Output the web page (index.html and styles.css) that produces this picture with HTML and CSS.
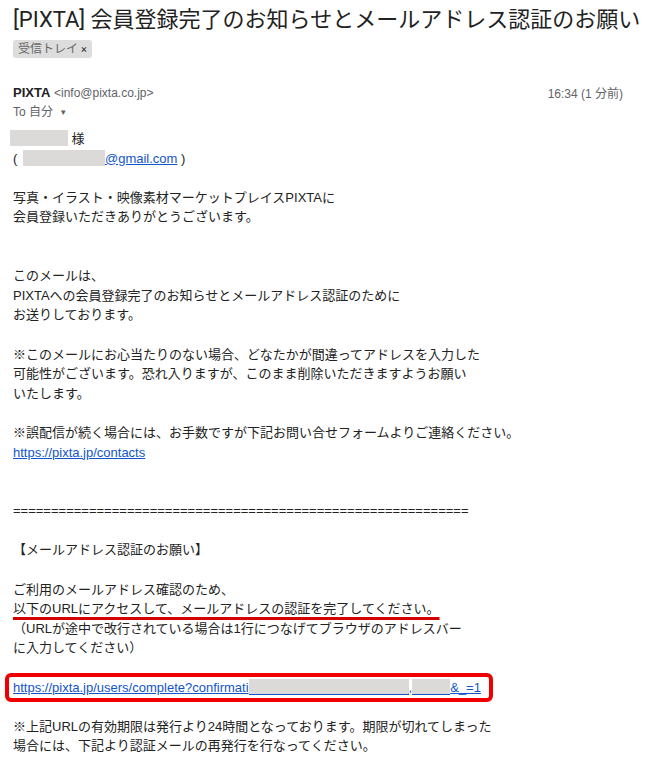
FILE: index.html
```html
<!DOCTYPE html>
<html lang="ja">
<head>
  <meta charset="UTF-8" />
  <title>[PIXTA] 会員登録完了のお知らせ</title>
  <link rel="stylesheet" href="styles.css">
</head>
<body>
  <div class="subject">
    <h1>[PIXTA] 会員登録完了のお知らせとメールアドレス認証のお願い</h1>
    <span class="label">受信トレイ <span class="label-x">×</span></span>
  </div>

  <div class="sender">
    <div class="sender-row">
      <div><b class="from-name">PIXTA</b> <span class="from-mail">&lt;info@pixta.co.jp&gt;</span></div>
      <div class="time">16:34 (1 分前)</div>
    </div>
    <div class="to">To 自分 <span class="caret">▼</span></div>
  </div>

  <div class="message">
    <span class="redact name"></span> 様<br>
    ( <span class="redact mail"></span><a href="#">@gmail.com</a> )<br>
    <br>
    写真・イラスト・映像素材マーケットプレイスPIXTAに<br>
    会員登録いただきありがとうございます。<br>
    <br>
    <br>
    このメールは、<br>
    PIXTAへの会員登録完了のお知らせとメールアドレス認証のために<br>
    お送りしております。<br>
    <br>
    ※このメールにお心当たりのない場合、どなたかが間違ってアドレスを入力した<br>
    可能性がございます。恐れ入りますが、このまま削除いただきますようお願い<br>
    いたします。<br>
    <br>
    ※誤配信が続く場合には、お手数ですが下記お問い合せフォームよりご連絡ください。<br>
    <a href="#">https://pixta.jp/contacts</a><br>
    <br>
    <br>
    ============================================================<br>
    <br>
    【メールアドレス認証のお願い】<br>
    <br>
    ご利用のメールアドレス確認のため、<br>
    <span class="marked">以下のURLにアクセスして、メールアドレスの認証を完了してください。</span><br>
    （URLが途中で改行されている場合は1行につなげてブラウザのアドレスバー<br>
    に入力してください）<br>
    <br>
    <div class="url-box">
      <a href="#">https://pixta.jp/users/complete?confirmati<span class="redact url-a"></span>,<span class="redact url-b"></span>&amp;_=1</a>
    </div>
    <br>
    ※上記URLの有効期限は発行より24時間となっております。期限が切れてしまった<br>
    場合には、下記より認証メールの再発行を行なってください。
  </div>
</body>
</html>
```

FILE: styles.css
```css
body {
  margin: 0;
  padding: 0 13px;
  background-color: #fff;
  color: #222;
  font-family: "Liberation Sans", Arial, "Noto Sans CJK JP", sans-serif;
  font-size: 13px;
}

.subject h1 {
  margin: 6px 0 0 0;
  font-family: Roboto, "Noto Sans CJK JP", sans-serif;
  font-weight: 400;
  font-size: 22px;
  line-height: 28px;
  color: #222;
  white-space: nowrap;
}

.label {
  display: inline-block;
  margin-top: 6px;
  padding: 0 5px;
  height: 18px;
  line-height: 18px;
  background-color: #ddd;
  border-radius: 3px;
  color: #666;
  font-size: 12px;
  font-family: Roboto, "Noto Sans CJK JP", sans-serif;
}

.label-x {
  font-size: 11px;
  color: #333;
}

.sender {
  margin-top: 24px;
}

.sender-row {
  display: flex;
  justify-content: space-between;
  align-items: center;
  height: 20px;
}

.from-name {
  font-weight: bold;
  font-size: 13px;
  color: #222;
}

.from-mail {
  font-size: 12px;
  color: #5f6368;
}

.time {
  margin-right: 11px;
  font-size: 12px;
  color: #5f6368;
}

.to {
  height: 20px;
  line-height: 20px;
  font-size: 12px;
  color: #5f6368;
}

.caret {
  font-size: 8px;
  margin-left: 3px;
  vertical-align: 1px;
}

.message {
  margin-top: 7px;
  line-height: 19.6px;
}

.message a {
  color: #15c;
  text-decoration: underline;
}

.redact {
  display: inline-block;
  height: 16px;
  background-color: #dcd9d9;
  vertical-align: -3px;
}

.redact.name {
  width: 58px;
  margin-left: -3px;
}

.redact.mail {
  width: 82px;
  margin-left: 2px;
}

.redact.url-a {
  width: 160px;
  border-bottom: 1px solid #15c;
  height: 15px;
}

.redact.url-b {
  width: 38px;
  border-bottom: 1px solid #15c;
  height: 15px;
}

.marked {
  text-decoration: underline;
  text-decoration-color: #d40000;
  text-decoration-thickness: 3px;
  text-underline-offset: 4px;
}

.url-box {
  width: fit-content;
  margin: -5px 0 -5px -8px;
  padding: 1px 8px 1px 4px;
  border: 4px solid #e00;
  border-radius: 6px;
}
```
